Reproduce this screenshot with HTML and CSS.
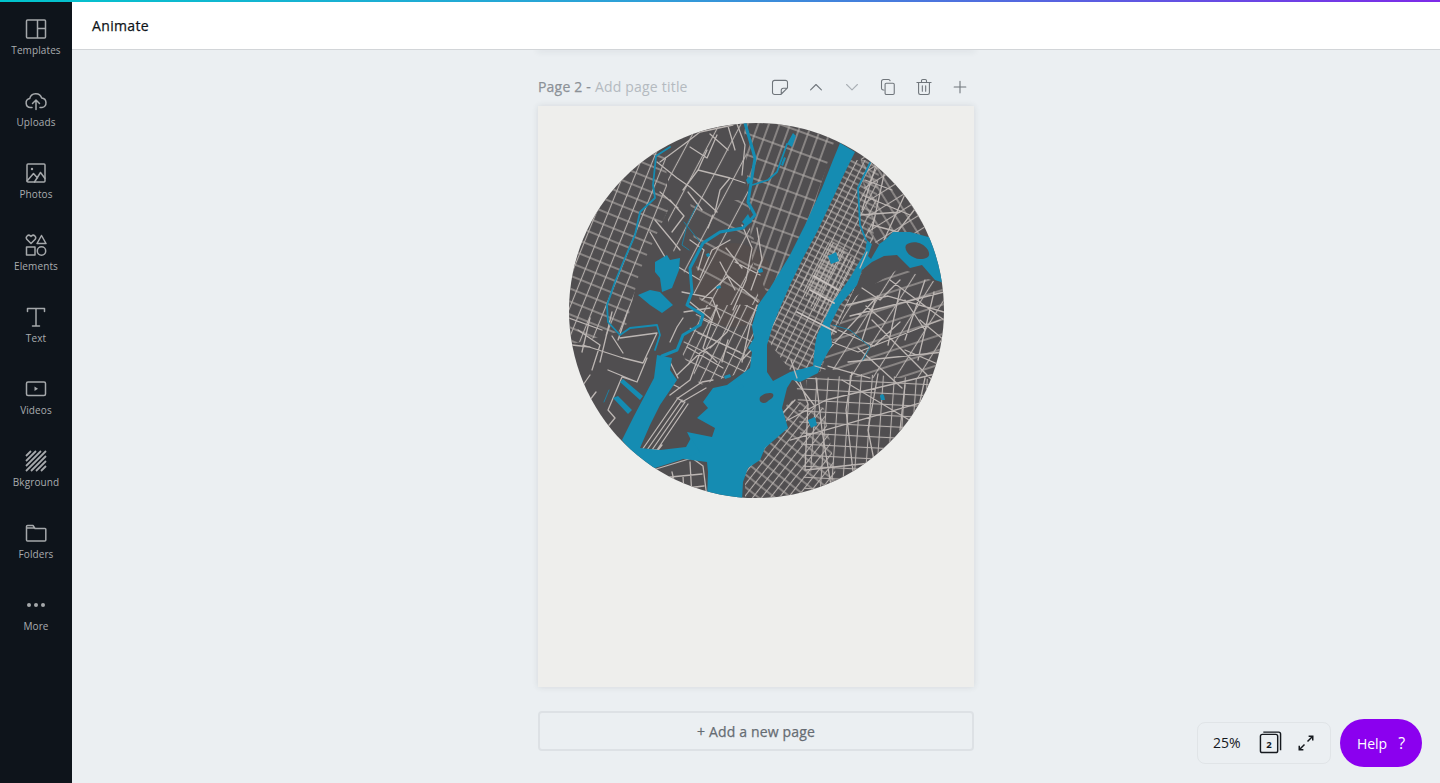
FILE: index.html
```html
<!DOCTYPE html>
<html lang="en">
<head>
<meta charset="utf-8">
<title>Animate</title>
<link rel="stylesheet" href="styles.css">
</head>
<body>
<div class="topline"></div>
<div class="app">
  <aside class="sidebar">
    <div class="nav-item"><svg class="nav-icon" viewBox="0 0 24 24"><path d="M3.500 3h17a1 1 0 0 1 1 1v16a1 1 0 0 1-1 1h-17a1 1 0 0 1-1-1V4a1 1 0 0 1 1-1zM13.500 3v18M13.500 11.500h8"/></svg><span>Templates</span></div>
    <div class="nav-item"><svg class="nav-icon" viewBox="0 0 24 24"><path d="M8 18.500H6.500a4.500 4.500 0 0 1-.8-8.900 6.200 6.200 0 0 1 12-.6 4.800 4.800 0 0 1 .3 9.500H16M12 20.500v-9M8.500 14.500l3.500-3.500 3.500 3.500"/></svg><span>Uploads</span></div>
    <div class="nav-item"><svg class="nav-icon" viewBox="0 0 24 24"><rect x="3" y="3" width="18" height="18" rx="1"/><circle class="solid" cx="8" cy="8" r="1.200"/><path d="M3 20l6.500-7.500 4 4.500M10.500 21l6-9.500 4.500 6"/></svg><span>Photos</span></div>
    <div class="nav-item"><svg class="nav-icon" viewBox="0 0 24 24"><path d="M7 10.500L2.800 6.200a2.500 2.500 0 0 1 3.600-3.400l.6.600.6-.6a2.500 2.500 0 0 1 3.600 3.400zM17.500 2.500l4.500 8h-9zM2.500 14h8.500v8H2.500z"/><circle cx="17.500" cy="18" r="4.200"/></svg><span>Elements</span></div>
    <div class="nav-item"><svg class="nav-icon" viewBox="0 0 24 24"><path d="M3.500 6.500V3.500h17v3M12 3.500V21M8.500 21h7"/></svg><span>Text</span></div>
    <div class="nav-item"><svg class="nav-icon" viewBox="0 0 24 24"><rect x="2.500" y="5" width="19" height="13.500" rx="1.500"/><path class="solid" d="M10.500 9.500l3.500 2.200-3.500 2.300z"/></svg><span>Videos</span></div>
    <div class="nav-item"><svg class="nav-icon hatch" viewBox="0 0 24 24"><path d="M2 7l5-5M2 12L12 2M2 17L17 2M2 22L22 2M7 22L22 7M12 22l10-10M17 22l5-5"/></svg><span>Bkground</span></div>
    <div class="nav-item"><svg class="nav-icon" viewBox="0 0 24 24"><path d="M2.500 7V5.500a1 1 0 0 1 1-1h5.500l2 3h10a.8.8 0 0 1 .8.800V19a1 1 0 0 1-1 1h-17.300a1 1 0 0 1-1-1V7h8"/></svg><span>Folders</span></div>
    <div class="nav-item"><svg class="nav-icon" viewBox="0 0 24 24"><circle class="solid" cx="5" cy="12" r="2"/><circle class="solid" cx="12" cy="12" r="2"/><circle class="solid" cx="19" cy="12" r="2"/></svg><span>More</span></div>
  </aside>
  <main class="workspace">
    <header class="header">Animate</header>
    <section class="canvas">
      <div class="prev-page"></div>
      <div class="page-head">
        <div class="page-title"><b>Page 2 -</b> Add page title</div>
        <div class="tools">
          <svg class="tool" viewBox="0 0 24 24"><path d="M5.500 4h13A2.500 2.500 0 0 1 21 6.500V13l-8 8H5.500A2.500 2.500 0 0 1 3 18.500v-12A2.500 2.500 0 0 1 5.500 4zM13.500 20.500V16a2.500 2.500 0 0 1 2.500-2.500h4.500"/></svg>
          <svg class="tool" viewBox="0 0 24 24"><path d="M5.500 15.500L12 9l6.500 6.500"/></svg>
          <svg class="tool faint" viewBox="0 0 24 24"><path d="M5.500 9l6.500 6.500L18.500 9"/></svg>
          <svg class="tool" viewBox="0 0 24 24"><path d="M7 15.500H6a2 2 0 0 1-1.800-2V5.500A2.500 2.500 0 0 1 6.700 3h5.800a2 2 0 0 1 2 1.500M10 7.500h8a1.500 1.500 0 0 1 1.500 1.500v10.500A1.500 1.500 0 0 1 18 21h-8a1.500 1.500 0 0 1-1.500-1.500V9A1.500 1.500 0 0 1 10 7.500z"/></svg>
          <svg class="tool" viewBox="0 0 24 24"><path d="M3.500 6.500h17M9 6.500V4.500a1.500 1.500 0 0 1 1.500-1.500h3A1.500 1.500 0 0 1 15 4.500v2M5.500 6.500v12.500a2 2 0 0 0 2 2h9a2 2 0 0 0 2-2V6.500M10 10.500v6.500M14 10.500v6.500"/></svg>
          <svg class="tool" viewBox="0 0 24 24"><path d="M12 5v14M5 12h14"/></svg>
        </div>
      </div>
      <div class="page">
        <svg class="map" viewBox="569 123 375 375" aria-hidden="true">
          <defs>
            <clipPath id="disc"><circle cx="756.500" cy="310.500" r="187.500"/></clipPath>
            <pattern id="manA" width="4.500" height="5" patternUnits="userSpaceOnUse" patternTransform="rotate(27)"><path d="M2.250 0v5"/></pattern>
            <pattern id="manB" width="4" height="4" patternUnits="userSpaceOnUse" patternTransform="rotate(27)"><path d="M0 2h4"/></pattern>
            <pattern id="manC" width="7" height="10" patternUnits="userSpaceOnUse" patternTransform="rotate(27)"><path d="M3.500 0v10"/></pattern>
            <pattern id="manD" width="8" height="6" patternUnits="userSpaceOnUse" patternTransform="rotate(27)"><path d="M0 3h8"/></pattern>
            <pattern id="gridA" width="24" height="11" patternUnits="userSpaceOnUse" patternTransform="rotate(3)"><path d="M0 5.500h24"/></pattern>
            <pattern id="gridB" width="11" height="16" patternUnits="userSpaceOnUse" patternTransform="rotate(4)"><path d="M5.500 0v16"/></pattern>
            <pattern id="gridC" width="7" height="9" patternUnits="userSpaceOnUse" patternTransform="rotate(38)"><path d="M3.500 0v9"/></pattern>
            <pattern id="gridD" width="10" height="10" patternUnits="userSpaceOnUse" patternTransform="rotate(38)"><path d="M0 5h10"/></pattern>
            <pattern id="njA" width="11" height="13" patternUnits="userSpaceOnUse" patternTransform="rotate(22)"><path d="M5.500 0v13"/></pattern>
            <pattern id="njB" width="15" height="12" patternUnits="userSpaceOnUse" patternTransform="rotate(22)"><path d="M0 6h15"/></pattern>
            <pattern id="upA" width="10" height="13" patternUnits="userSpaceOnUse" patternTransform="rotate(20)"><path d="M5 0v13"/></pattern>
            <pattern id="upB" width="22" height="20" patternUnits="userSpaceOnUse" patternTransform="rotate(20)"><path d="M0 10h22"/></pattern>
            <pattern id="brA" width="10" height="13" patternUnits="userSpaceOnUse" patternTransform="rotate(-32)"><path d="M5 0v13"/></pattern>
            <pattern id="brB" width="15" height="13" patternUnits="userSpaceOnUse" patternTransform="rotate(-32)"><path d="M0 6.500h15"/></pattern>
            <pattern id="quA" width="24" height="14" patternUnits="userSpaceOnUse" patternTransform="rotate(-18)"><path d="M0 7h24"/></pattern>
            <pattern id="quB" width="19" height="20" patternUnits="userSpaceOnUse" patternTransform="rotate(32)"><path d="M9.500 0v20"/></pattern>
            <pattern id="midA" width="19" height="20" patternUnits="userSpaceOnUse" patternTransform="rotate(28)"><path d="M9.500 0v20"/></pattern>
            <pattern id="midB" width="24" height="26" patternUnits="userSpaceOnUse" patternTransform="rotate(28)"><path d="M0 13h24"/></pattern>
            <pattern id="penA" width="9" height="20" patternUnits="userSpaceOnUse" patternTransform="rotate(26)"><path d="M4.500 0v20"/></pattern>
            <pattern id="penB" width="20" height="15" patternUnits="userSpaceOnUse" patternTransform="rotate(26)"><path d="M0 7.500h20"/></pattern>
          </defs>
          <g clip-path="url(#disc)">
            <rect class="land" x="569" y="123" width="375" height="375"/>
            <circle class="warm" cx="733" cy="285" r="42"/>

            <g class="grids">
              <path fill="url(#manC)" d="M790 370L760 330 800 250 840 160H880L872 250 840 320 820 372z"/>
              <path fill="url(#manD)" d="M790 370L760 330 800 250 840 160H880L872 250 840 320 820 372z"/>
              <path fill="url(#manA)" d="M812 310L800 285 830 240 858 262 830 320z"/>
              <path fill="url(#manB)" d="M820 296L808 285 832 240 848 250z"/>
              <path fill="url(#gridA)" d="M796 376L860 374 944 375V498H805z"/>
              <path fill="url(#gridB)" d="M806 380L860 374 944 380 900 498H812z"/>
              <path fill="url(#gridC)" d="M745 498L745 465 790 400 824 408 840 498z"/>
              <path fill="url(#gridD)" d="M745 498L745 465 790 400 824 408 840 498z"/>
              <path fill="url(#njA)" d="M569 345V230L610 170 665 135 668 210 640 270 625 330z"/>
              <path fill="url(#njB)" d="M569 345V230L610 170 665 135 668 210 640 270 625 330z"/>
              <path fill="url(#upA)" d="M744 123H840L800 250 770 300 752 260z"/>
              <path fill="url(#upB)" d="M744 123H840L800 250 770 300 752 260z"/>
              <path fill="url(#brA)" d="M860 150L935 215 940 240 870 250z"/>
              <path fill="url(#brB)" d="M860 150L935 215 940 240 870 250z"/>
              <path fill="url(#quA)" d="M822 366L850 300 900 268 944 285V378H860z"/>
              <path fill="url(#quB)" d="M822 366L850 300 900 268 944 285V378H860z"/>
              <path fill="url(#midA)" d="M668 135L744 123 752 260 760 305H700L668 240z"/>
              <path fill="url(#midB)" d="M690 200L750 200 760 305H700z"/>
              <path fill="url(#penA)" d="M700 305H765L752 370 700 385 680 350z"/>
              <path fill="url(#penB)" d="M700 305H765L752 370 700 385 680 350z"/>
            </g>

            <path class="roads" d="M717 212L690 187 677 178 657 162M713 215L708 228M745 183L730 178 720 190 715 212M698 170L730 178M683 190L698 170 707 150M690 147L707 158 717 135M660 162L687 142 700 132 733 125M678 208L660 192M737 124L745 145 742 175M728 126L735 150M710 134L728 150M688 192L702 210M670 200L684 216 672 232M655 220L680 250M650 232L668 262M690 240L704 250 698 270M670 262L700 280M682 292L712 298 720 318M700 278L712 250 730 240M726 248L742 268M742 225L752 248 746 280 733 310M720 262L735 290M757 228L762 260 751 290M702 300L728 276 758 302M735 262L760 275M690 302L712 320"/>
            <path class="roads" d="M620 338L657 333M583 345L623 358 643 363 657 333M623 353L612 336M608 370L637 382 647 358M637 382L622 377 608 410 615 418 605 430M590 375L583 385M578 330L600 345 592 370M569 318L602 330M572 345L590 347M590 318L582 352M612 312L600 362M628 310L618 340M572 372L578 385M596 392L586 405M670 342L677 327 683 318M687 347L723 368M677 375L700 353 713 345M698 333L740 352M717 305L703 348 717 362M740 305L727 332 710 348M757 305L750 325 742 362M727 352L742 360 753 348M678 398L702 382 713 380M682 402L706 388M700 353L690 380 670 395M670 362L678 378M642 450L678 398M647 450L682 400M652 450L685 402M657 450L688 404M640 450H658L662 445M677 398L684 402M664 380L680 388M700 318L716 326M684 312L710 308M728 340L722 362"/>
            <path class="roads" d="M653 470L692 458 703 466 707 498M660 478L702 474M672 472L678 498M690 462L692 498M668 490L704 486M683 476L684 494M800 372L822 364M800 382L808 404 805 470M816 378L822 430 833 498M852 372L846 410 854 480M878 374L868 430 876 470M905 385L900 430M925 378L916 420M788 420L826 400 944 372M790 440L860 420 930 400M806 470L880 462M848 362L944 352M858 348L902 388M872 320L944 392M842 380L926 430M838 330L874 346 900 322M850 316L944 292M832 342L858 352 940 320M876 298L862 340M900 290L888 345M925 280L905 340M934 292L918 360M846 305L888 296 944 312M862 288L880 300 900 280M890 280L944 320M826 352L878 296M828 366L870 378M905 300L925 330M920 320L944 340M866 306L885 322M905 350L940 365M780 416L795 400M814 405L795 380"/>
            <path class="roads" d="M876 165L862 210M885 170L872 230M906 192L884 240M918 205L895 235M865 180L892 190M862 195L910 215M860 215L900 212M872 225L898 232M935 232L918 248"/>

            <g class="water">
              <path d="M840 143L855 152 845 172 833 198 817 232 803 258 790 285 780 308 773 325 767 345 767 372 773 381 790 372 813 366 815 345 817 335 833 302 850 278 865 252 867 240 875 247 885 240 893 232 910 232 932 238 950 285 935 280 922 265 910 268 897 255 884 256 872 262 862 270 857 285 840 305 830 325 832 345 822 363 818 373 800 382 792 380 787 388 782 408 788 428 765 448 760 460 748 468 743 482 742 500H707L708 472 707 462 677 458 692 442 687 432 712 437 715 428 697 418 708 408 703 402 713 388 727 385 750 368 752 352 748 348 754 338 752 326 758 305 770 288 790 255 805 225 822 188 833 160z"/>
              <path d="M657 355L672 358 670 370 677 380 660 405 650 425 640 448 660 450 686 447 691 438 700 452 680 460 655 468 645 470 622 440 634 416 654 378z"/>
              <path d="M613 398L618 396 632 410 628 414zM620 382L623 379 643 396 640 400z"/>
              <path d="M655 262L667 255 670 260 680 258 679 270 672 288 662 292 660 278 655 272zM638 295L650 290 660 292 673 305 662 313 650 305z"/>
              <path d="M880 396l4-1 1 5-4 0zM808 420l7-3 2 8-6 3z"/>
            </g>

            <g class="rivers">
              <path class="thin" d="M670 147L656 156 653 185 655 198 640 212 635 235 625 258 615 282 607 305 608 322 620 335 630 328 657 325 660 335 655 350"/>
              <path class="mid" d="M745 123L755 158 748 202 755 215 743 228 720 232 703 243 690 268 692 292 687 305 703 315 700 325 683 335 677 350 662 356"/>
              <path class="thin" d="M870 163L858 188 860 225 866 240"/>
              <path class="hair" d="M833 325L850 330 870 347 863 360M697 205L687 225 682 245 689 250M684 222L700 242M609 390L604 402"/>
              <path class="thin" d="M787 144L777 172 768 180 752 185"/>
            </g>
            <path class="blue" d="M787 144l6-11 3 3-4 11zM746 180l3-4 3 6-4 2zM742 222l6-8 4 8-6 4zM724 376l6-2 1 3-6 2zM738 386l4-2 2 3-4 2zM758 270l4-2 1 4-4 1zM706 254l3-1 1 3-3 1zM880 395l3-1 1 4-3 0zM828 256l8-4 3 9-8 3zM716 287l4-2 1 3-4 1zM781 165l3-8 2 1-3 8z"/>

            <path class="land" d="M760 397c4-4 11-5 13-3 2 4-5 6-6 8-3 2-9 1-7-5zM906 245c6-5 17-3 22 5 3 6 0 9-8 9-7 0-17-7-14-14zM873 241l6 4-8 14-3-3z"/>
            <path class="roads" d="M867 252L860 268M815 366L825 369M797 378L791 360"/>
            <path class="roads thick" d="M797 312L836 332M810 290L834 303M814 276L838 290"/>
          </g>
        </svg>
      </div>
      <button class="add-page">+ Add a new page</button>
    </section>
    <div class="zoombar">
      <span class="zoom-value">25%</span>
      <svg class="pages-icon" viewBox="0 0 24 24"><rect x="1.500" y="3.500" width="18" height="19" rx="2"/><path d="M4.500 1.200h16a2 2 0 0 1 2 2v17"/><text x="10.500" y="17.500">2</text></svg>
      <svg class="expand-icon" viewBox="0 0 24 24"><path d="M14 10l7-7M15.500 3H21v5.500M10 14l-7 7M8.500 21H3v-5.500"/></svg>
    </div>
    <button class="help">Help<span class="q">?</span></button>
  </main>
</div>
</body>
</html>
```
FILE: styles.css
```css
* { box-sizing: border-box; }
html, body { margin: 0; height: 100%; overflow: hidden; }
body { font-family: "Open Sans", "Noto Sans", sans-serif; background: #ebeff2; color: #0e1318; }

.topline { height: 2px; background: linear-gradient(90deg, #00c4cc 0%, #2f9fd8 45%, #7d2ae8 100%); }
.app { display: flex; height: 781px; }

.sidebar { width: 72px; flex: none; background: #0e141b; display: flex; flex-direction: column; }
.nav-item { height: 72px; display: flex; flex-direction: column; align-items: center; padding-top: 15px; color: #a9acaf; font-size: 10px; line-height: 14px; letter-spacing: .1px; }
.nav-icon { width: 24px; height: 24px; margin-bottom: 2px; fill: none; stroke: #a5a8ab; stroke-width: 1.500; stroke-linecap: round; stroke-linejoin: round; }
.nav-icon .solid { fill: #a5a8ab; stroke: none; }
.nav-icon.hatch { stroke-width: 1.800; stroke-linecap: butt; }

.workspace { flex: 1; position: relative; display: flex; flex-direction: column; min-width: 0; }
.header { height: 48px; flex: none; background: #fff; border-bottom: 1px solid #d2d5d8; padding: 0 20px; font-size: 14px; font-weight: 400; letter-spacing: .35px; -webkit-text-stroke: .25px #0e1318; line-height: 47px; position: relative; z-index: 2; }

.canvas { flex: 1; display: flex; flex-direction: column; align-items: center; }
.prev-page { width: 436px; height: 0; box-shadow: 0 0 6px 1px rgba(40, 50, 60, .16); flex: none; }
.page-head { width: 436px; height: 56px; flex: none; display: flex; align-items: center; justify-content: space-between; padding-top: 18px; padding-bottom: 1px; }
.page-title { font-size: 14px; color: #b4bac0; line-height: 20px; letter-spacing: .2px; }
.page-title b { font-weight: 400; color: #8b9197; -webkit-text-stroke: .25px #8b9197; }
.tools { display: flex; gap: 16px; margin-right: 4px; }
.tool { width: 20px; height: 20px; fill: none; stroke: #6f757b; stroke-width: 1.300; stroke-linecap: round; stroke-linejoin: round; }
.tool.faint { stroke: #a9afb5; }

.page { width: 436px; height: 581px; flex: none; background: #eeeeec; box-shadow: 0 0 6px rgba(40, 50, 60, .12); padding: 17px 0 0 31px; }
.map { display: block; width: 375px; height: 375px; }
.land { fill: #504e50; }
.warm { fill: #5a4e4b; opacity: .55; }
.grids path { stroke: none; }
pattern path { stroke: #b6b0ad; stroke-width: 1.100; fill: none; }
.water path { fill: #158cb2; }
.blue { fill: #158cb2; }
.rivers path { fill: none; stroke: #158cb2; stroke-linejoin: round; stroke-linecap: round; }
.rivers .thin { stroke-width: 1.800; }
.rivers .mid { stroke-width: 3; }
.rivers .hair { stroke-width: 1; stroke: #1f7f9f; }
.roads { fill: none; stroke: #bcb6b3; stroke-width: 1.300; stroke-linejoin: round; stroke-linecap: round; }
.roads.thick { stroke-width: 1.800; stroke: #c8c2bf; }

.add-page { width: 436px; height: 40px; flex: none; margin-top: 24px; background: transparent; border: 2px solid #dde1e5; border-radius: 4px; font: 400 14px/36px "Open Sans", sans-serif; letter-spacing: .15px; -webkit-text-stroke: .25px #666c72; color: #666c72; padding: 1px 0 0; }

.zoombar { position: absolute; left: 1125px; top: 720px; width: 134px; height: 42px; border: 1px solid #e0e4e7; border-radius: 8px; display: flex; align-items: center; padding-left: 15px; }
.zoom-value { font-size: 14px; width: 46px; color: #15191e; padding-bottom: 1px; }
.pages-icon { width: 23px; height: 23px; fill: none; stroke: #15191e; stroke-width: 1.500; margin-top: -2px; }
.pages-icon text { font: 700 10px "Open Sans", sans-serif; fill: #15191e; stroke: none; text-anchor: middle; }
.expand-icon { width: 18px; height: 18px; margin-left: 15px; fill: none; stroke: #15191e; stroke-width: 2; }

.help { position: absolute; left: 1268px; top: 717px; width: 82px; height: 48px; border: none; border-radius: 24px; background: #8b00ef; color: #fff; font: 400 14px "Open Sans", sans-serif; padding: 0; display: flex; align-items: center; justify-content: center; gap: 11px; }
.q { font-size: 16px; }
```
